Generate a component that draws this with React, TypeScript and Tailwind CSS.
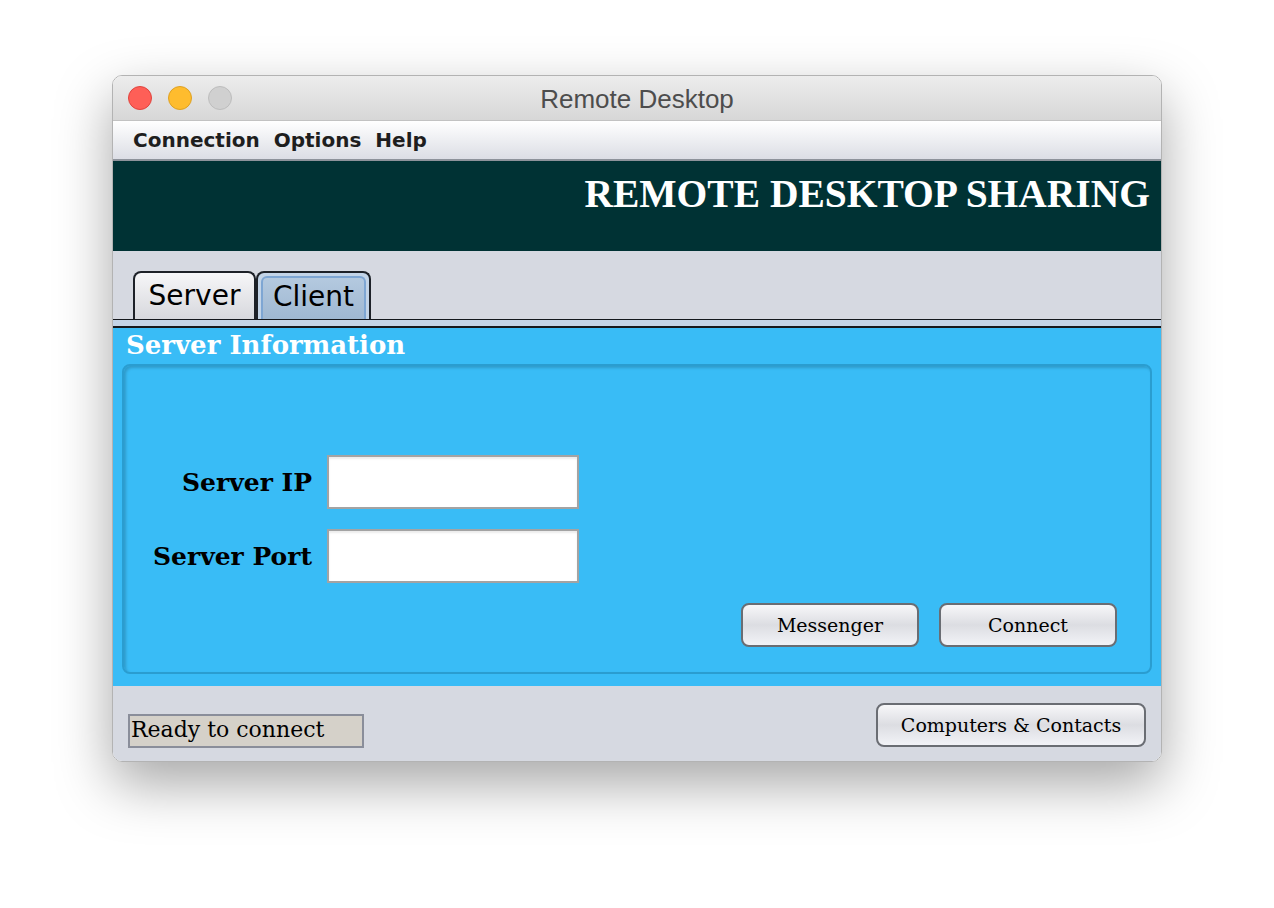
export default function App() {
  const sans = { fontFamily: '"DejaVu Sans", "Liberation Sans", sans-serif' };
  const serif = { fontFamily: '"DejaVu Serif", "Liberation Serif", serif' };
  const times = { fontFamily: '"Liberation Serif", serif' };

  return (
    <main className="min-h-[908px] w-[1274px] bg-white pl-[112px] pt-[75px]">
      <div className="w-[1050px] rounded-[10px] overflow-hidden border border-[#b3b3b3] shadow-[0_22px_55px_rgba(0,0,0,0.35)]">
        {/* title bar */}
        <div className="h-[45px] grid grid-cols-[1fr_auto_1fr] items-center bg-gradient-to-b from-[#ededed] to-[#d7d7d7] border-b border-[#c2c2c2]">
          <div className="flex items-center gap-[16px] pl-[15px]">
            <span className="w-[24px] h-[24px] rounded-full bg-[#fe5f57] border border-[#e0443e]" />
            <span className="w-[24px] h-[24px] rounded-full bg-[#febc2e] border border-[#dea123]" />
            <span className="w-[24px] h-[24px] rounded-full bg-[#d0d0d0] border border-[#bdbdbd]" />
          </div>
          <div className="text-[26px] text-[#4d4d4d] pt-[3px]" style={{ fontFamily: '"Liberation Sans", sans-serif' }}>
            Remote Desktop
          </div>
          <div />
        </div>

        {/* menu bar */}
        <div
          className="h-[40px] flex items-center gap-[14px] pl-[20px] bg-gradient-to-b from-white to-[#dcdee5] border-b-2 border-[#8e939b] text-[20px] font-bold text-[#1e1e1e]"
          style={sans}
        >
          <span>Connection</span>
          <span>Options</span>
          <span>Help</span>
        </div>

        {/* header */}
        <div className="h-[90px] bg-[#003234] flex justify-end pr-[11px] pt-[14px]">
          <h1 className="text-[39.5px] font-bold text-white leading-none" style={times}>
            REMOTE DESKTOP SHARING
          </h1>
        </div>

        {/* tabs */}
        <div className="bg-[#d6d9e1] pt-[20px] pl-[20px] flex items-end">
          <div
            className="h-[48px] w-[123px] flex items-center justify-center rounded-t-[8px] border-2 border-b-0 border-[#1d2128] bg-gradient-to-b from-[#f6f6f8] to-[#d7d8dd] text-[28px] text-black"
            style={sans}
          >
            Server
          </div>
          <div className="h-[48px] w-[115px] rounded-t-[8px] border-2 border-b-0 border-[#1d2128] bg-[#c3d4e7] p-[3px] pb-0">
            <div
              className="h-full flex items-center justify-center pb-[3px] rounded-t-[6px] border-2 border-b-0 border-[#7ea6d3] bg-gradient-to-b from-[#b4c9df] to-[#9fb8d2] text-[28px] text-black"
              style={sans}
            >
              Client
            </div>
          </div>
        </div>
        <div className="h-[9px] bg-[#c3d4e7] border-t border-b-2 border-[#15181d]" />

        {/* client panel */}
        <div className="bg-[#39bcf6] h-[358px] px-[9px] pb-[12px] flex flex-col">
          <h2 className="text-[26px] font-bold text-white leading-none pt-[4px] pl-[4px] h-[36px]" style={serif}>
            Server Information
          </h2>
          <div className="flex-1 rounded-[8px] border-2 border-[#2a9dd0] shadow-[inset_2px_2px_3px_rgba(0,0,0,0.18)] flex flex-col pt-[89px] pr-[33px] pb-[25px]">
            <div className="grid grid-cols-[188px_252px] gap-x-[15px] gap-y-[20px] items-center">
              <label className="text-right text-[25px] font-bold text-black pt-[2px]" style={serif}>
                Server IP
              </label>
              <input className="h-[54px] bg-white border-2 border-[#a3a3a3] shadow-[inset_0_2px_2px_rgba(0,0,0,0.08)] outline-none" />
              <label className="text-right text-[25px] font-bold text-black pt-[2px]" style={serif}>
                Server Port
              </label>
              <input className="h-[54px] bg-white border-2 border-[#a3a3a3] shadow-[inset_0_2px_2px_rgba(0,0,0,0.08)] outline-none" />
            </div>
            <div className="flex justify-end gap-[20px] mt-[20px]">
              <button
                className="w-[178px] h-[44px] rounded-[8px] border-2 border-[#6a6d73] bg-gradient-to-b from-[#f7f7f9] via-[#dcdde2] to-[#f2f3f7] text-[19px] text-black"
                style={serif}
              >
                Messenger
              </button>
              <button
                className="w-[178px] h-[44px] rounded-[8px] border-2 border-[#6a6d73] bg-gradient-to-b from-[#f7f7f9] via-[#dcdde2] to-[#f2f3f7] text-[19px] text-black"
                style={serif}
              >
                Connect
              </button>
            </div>
          </div>
        </div>

        {/* status bar */}
        <div className="h-[75px] bg-[#d6d9e1] flex items-end justify-between px-[15px] pb-[13px]">
          <div
            className="w-[236px] h-[34px] bg-[#d5d1c9] border-2 border-[#8a8e9a] flex items-center pl-[1px] pb-[2px] text-[22px] text-black leading-none"
            style={serif}
          >
            Ready to connect
          </div>
          <button
            className="w-[270px] h-[44px] mb-[1px] rounded-[8px] border-2 border-[#6a6d73] bg-gradient-to-b from-[#f7f7f9] via-[#dcdde2] to-[#f2f3f7] text-[19px] text-black"
            style={serif}
          >
            Computers &amp; Contacts
          </button>
        </div>
      </div>
    </main>
  );
}
